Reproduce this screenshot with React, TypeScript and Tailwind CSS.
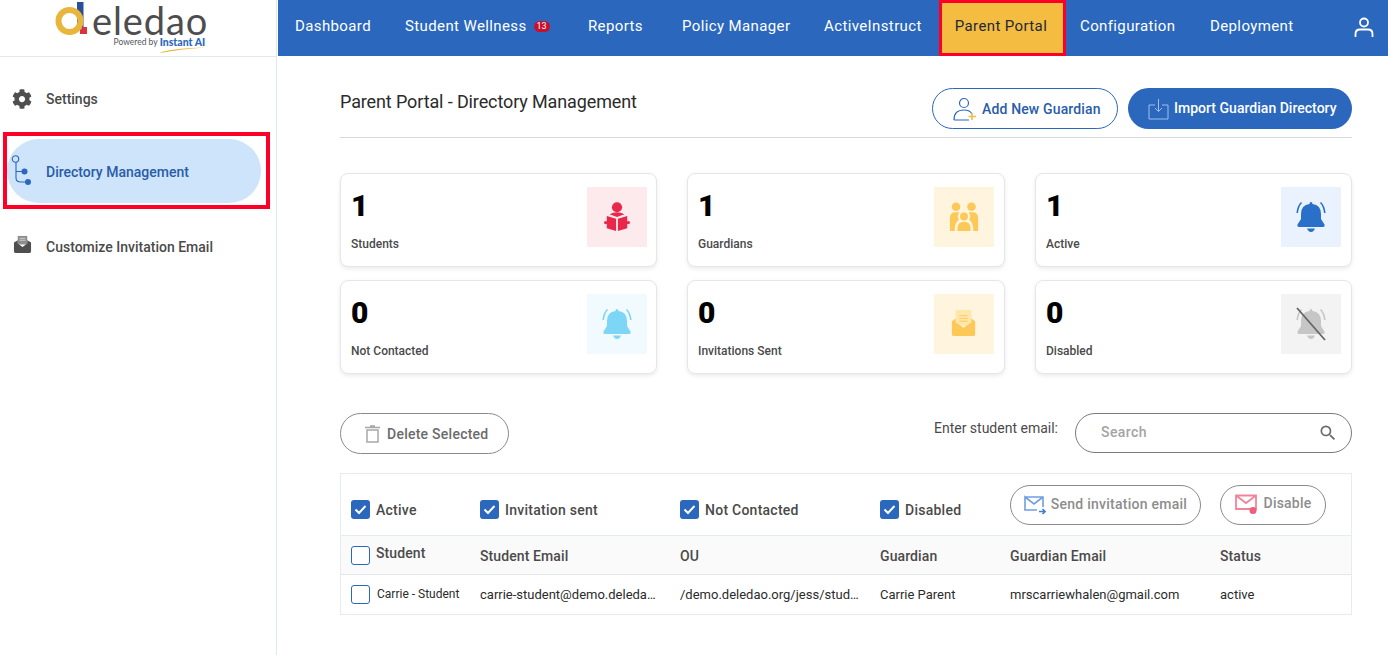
import React from "react";
import { FaCog } from "react-icons/fa";
import { MdSearch } from "react-icons/md";

const NAV = [
  { label: "Dashboard", cls: "ml-[17px] w-[110px]" },
  { label: "Student Wellness", cls: "w-[183px]", badge: true },
  { label: "Reports", cls: "w-[94px]" },
  { label: "Policy Manager", cls: "w-[142px]" },
  { label: "ActiveInstruct", cls: "w-[115px]" },
];

function Logo() {
  return (
    <div className="h-[57px] border-b border-[#e3e8ef] flex items-start pl-[55px] pt-[2px]">
      <svg width="33" height="36" viewBox="0 0 33 36" className="shrink-0">
        <rect x="22" y="0" width="6.5" height="26" fill="#2a4f97" />
        <circle cx="14.5" cy="19" r="11" fill="none" stroke="#e9b63d" strokeWidth="6" />
        <path d="M25 32 L25 28 L28 25 L32 25 L32 32 Z" fill="#d8343f" />
      </svg>
      <div className="flex flex-col items-end ml-[4px]">
        <span className="font-['Lato',sans-serif] text-[38px] leading-[32px] tracking-[0.9px] text-[#4d4d4f] mt-[2px]">eledao</span>
        <div className="flex items-center h-[13px] mr-[3px]">
          <span className="font-['Lato',sans-serif] text-[8.5px] leading-[13px] text-[#55575a]">Powered by</span>
          <span className="relative ml-[2px] font-['Lato',sans-serif] font-black text-[10.5px] leading-[13px] text-[#2a67bd]">
            Instant AI
            <svg width="46" height="6" viewBox="0 0 46 6" className="absolute left-0 top-[11px]">
              <path d="M0 5.5 Q14 1 46 0.5 Q18 2.5 2 5.8 Z" fill="#e9b63d" />
            </svg>
          </span>
        </div>
      </div>
    </div>
  );
}

function Sidebar() {
  return (
    <aside className="w-[277px] shrink-0 border-r border-[#e3e8ef] min-h-[655px]">
      <Logo />
      <div className="pt-[15px]">
        <div className="h-[54px] flex items-center pl-[12px]">
          <FaCog className="text-[#4f4f4f]" size={20} />
          <span className="ml-[14px] text-[14px] font-medium text-[#4a4a4a]">Settings</span>
        </div>
        <div className="mt-[6px] ml-[3px] w-[267px] h-[77px] border-[4px] border-[#fe0027] pt-[3px]">
          <div className="w-[254px] h-[64px] rounded-full bg-[#cde4fb] flex items-center pl-[4px]">
            <svg width="24" height="36" viewBox="0 0 24 36" fill="none" className="shrink-0">
              <circle cx="4.5" cy="6" r="3.2" stroke="#2a67bd" strokeWidth="1.1" />
              <path d="M5 9 V25 Q5 29 10 29 H17 M5 18.5 H13" stroke="#2a67bd" strokeWidth="1.1" />
              <circle cx="13.5" cy="18.5" r="3" fill="#2a67bd" />
              <circle cx="17" cy="29" r="3" fill="#2a67bd" />
            </svg>
            <span className="ml-[11px] pt-[2px] text-[14px] font-medium text-[#2a5ca8]">Directory Management</span>
          </div>
        </div>
        <div className="mt-[10px] h-[56px] flex items-center pl-[13px]">
          <svg width="19" height="19" viewBox="0 0 20 20" className="shrink-0 -mt-[6px]">
            <rect x="5" y="1" width="10" height="9" fill="#8d8d8d" />
            <path d="M7 3.5h6M7 5.5h6" stroke="#e5e5e5" strokeWidth="0.8" />
            <path d="M1 8 L5 5.5 V9 L10 12.5 L15 9 V5.5 L19 8 V17 Q19 19 17 19 H3 Q1 19 1 17 Z" fill="#4f4f4f" />
          </svg>
          <span className="ml-[14px] text-[14px] font-medium text-[#4a4a4a]">Customize Invitation Email</span>
        </div>
      </div>
    </aside>
  );
}

function TopNav() {
  return (
    <nav className="h-[56px] bg-[#2a67bd] flex items-center text-white text-[15px] tracking-[0.38px]">
      {NAV.map((n) => (
        <div key={n.label} className={`${n.cls} flex items-center -mt-[4px]`}>
          <span>{n.label}</span>
          {n.badge && (
            <span className="ml-[7px] w-[16px] h-[11px] rounded-full bg-[#c8102e] text-[9px] leading-[11px] text-center tracking-normal">13</span>
          )}
        </div>
      ))}
      <div className="w-[127px] h-[56px] bg-[#f4bc40] border-[3px] border-[#fe0027] flex items-center justify-center text-[#1f2937] pr-[3px]">
        <span className="-mt-[4px]">Parent Portal</span>
      </div>
      <span className="ml-[14px] w-[130px] -mt-[4px]">Configuration</span>
      <span className="w-[87px] -mt-[4px]">Deployment</span>
      <svg width="22" height="24" viewBox="0 0 22 24" fill="none" className="ml-[56px]" stroke="white" strokeWidth="1.8">
        <circle cx="11" cy="6.5" r="4" />
        <path d="M2.5 21 V18 Q2.5 13.5 7 13.5 H15 Q19.5 13.5 19.5 18 V21" />
      </svg>
    </nav>
  );
}

function BellIcon({ color }: { color: string }) {
  return (
    <svg width="30" height="32" viewBox="0 0 30 32" fill={color}>
      <path d="M15 1 Q16.5 1 16.5 3 Q25 4 25 13 V18 L28.5 23.5 Q29 26 27 26 H3 Q1 26 1.5 23.5 L5 18 V13 Q5 4 13.5 3 Q13.5 1 15 1 Z" />
      <path d="M11 27.5 H19 Q17.5 31 15 31 Q12.5 31 11 27.5 Z" />
      <path d="M5.5 1.5 Q2 5 1.2 12 M24.5 1.5 Q28 5 28.8 12" fill="none" stroke={color} strokeWidth="1.6" />
    </svg>
  );
}
function StudentIcon() {
  return (
    <svg width="26" height="30" viewBox="0 0 28 32" fill="#e8274b">
      <circle cx="14" cy="5.5" r="5.5" />
      <path d="M3 15 L13 18 V31 L3 28 Z M25 15 L15 18 V31 L25 28 Z M6 13 Q14 9 22 13 L14 16 Z" />
      <circle cx="1.8" cy="22" r="1.8" />
      <circle cx="26.2" cy="22" r="1.8" />
    </svg>
  );
}
function FamilyIcon() {
  return (
    <svg width="30" height="30" viewBox="0 0 32 32" fill="#fcc958">
      <circle cx="7.5" cy="5" r="4.6" />
      <circle cx="24" cy="5" r="4.6" />
      <path d="M1 31 V17 Q1 11 7 11 H11 Q8 15 10.5 19 Q6 22 6 31 Z" />
      <path d="M31 31 V17 Q31 11 25 11 H21 Q24 15 21.5 19 Q26 22 26 31 Z" />
      <circle cx="16" cy="15.5" r="4.2" />
      <path d="M9 31 V28 Q9 21 16 21 Q23 21 23 28 V31 Z" />
    </svg>
  );
}
function MailIcon() {
  return (
    <svg width="26" height="28" viewBox="0 0 28 30" fill="none">
      <rect x="5" y="0" width="17" height="17" fill="#ffe7ab" />
      <path d="M9 6h9M9 9h9M9 12h9" stroke="#fcc958" strokeWidth="1" />
      <path d="M1 12 L5 9 V13 L13.5 19 L22 13 V9 L26 12 V26 Q26 28 24 28 H3 Q1 28 1 26 Z" fill="#fcc958" />
    </svg>
  );
}
function DisabledBell() {
  return (
    <div className="relative w-[30px] h-[34px] flex items-center justify-center">
      <BellIcon color="#c6c6c6" />
      <svg width="30" height="34" viewBox="0 0 30 34" className="absolute left-0 top-0">
        <path d="M1 1 L29 33" stroke="#666" strokeWidth="1.8" />
      </svg>
    </div>
  );
}

const CARDS = [
  { n: "1", label: "Students", bg: "bg-[#fdeaed]", pr: "pr-[9px]", icon: <StudentIcon /> },
  { n: "1", label: "Guardians", bg: "bg-[#fff4de]", pr: "pr-[10px]", icon: <FamilyIcon /> },
  { n: "1", label: "Active", bg: "bg-[#eaf3fd]", pr: "pr-[10px]", icon: <BellIcon color="#2a70c8" /> },
  { n: "0", label: "Not Contacted", bg: "bg-[#f1faff]", pr: "pr-[9px]", icon: <BellIcon color="#7dd6f5" /> },
  { n: "0", label: "Invitations Sent", bg: "bg-[#fff4de]", pr: "pr-[10px]", icon: <MailIcon /> },
  { n: "0", label: "Disabled", bg: "bg-[#f3f3f3]", pr: "pr-[10px]", icon: <DisabledBell /> },
];

function Card({ n, label, bg, pr, icon }: { n: string; label: string; bg: string; pr: string; icon: React.ReactNode }) {
  return (
    <div className={`h-[94px] rounded-lg border border-[#e6e6e6] shadow-[0_2px_4px_rgba(0,0,0,0.08)] bg-white flex justify-between pl-[10px] ${pr} pt-[13px]`}>
      <div>
        <div className="text-[30px] leading-[36px] font-black text-black pt-[1px]">{n}</div>
        <div className="mt-[12px] text-[12px] leading-[16px] font-medium text-[#4a4a4a]">{label}</div>
      </div>
      <div className={`w-[60px] h-[60px] ${bg} flex items-center justify-center`}>{icon}</div>
    </div>
  );
}

function Check({ on }: { on?: boolean }) {
  return on ? (
    <span className="w-[19px] h-[19px] shrink-0 rounded-[3px] bg-[#2a67bd] flex items-center justify-center">
      <svg width="13" height="11" viewBox="0 0 13 11" fill="none">
        <path d="M1.5 5.5 L5 9 L11.5 2" stroke="white" strokeWidth="2" />
      </svg>
    </span>
  ) : (
    <span className="w-[19px] h-[19px] shrink-0 rounded-[3px] border border-[#2a67bd] bg-white" />
  );
}

function Filter({ label }: { label: string }) {
  return (
    <div className="flex items-center gap-[6px] pt-[10px]">
      <Check on />
      <span className="pt-[2px] text-[14px] tracking-[0.25px] font-medium text-[#4a4a4a]">{label}</span>
    </div>
  );
}

const GRID = "grid grid-cols-[140px_200px_200px_130px_210px_1fr]";

function Table() {
  return (
    <div className="mt-[19px] border border-[#e6ecf3] text-[#4a4a4a]">
      <div className={`${GRID} h-[62px] items-center border-b border-[#e6ecf3]`}>
        <div className="pl-[10px]"><Filter label="Active" /></div>
        <div className="-ml-[1px]"><Filter label="Invitation sent" /></div>
        <div className="-ml-[1px]"><Filter label="Not Contacted" /></div>
        <div className="-ml-[1px]"><Filter label="Disabled" /></div>
        <div className="-ml-[1px]">
          <button className="w-[191px] h-[40px] rounded-full border border-[#8a8a8a] flex items-center justify-center gap-[5px] text-[14px] tracking-[0.25px] font-medium text-[#8d8d8d]">
            <svg width="22" height="20" viewBox="0 0 22 20" fill="none" stroke="#6f9fdf" strokeWidth="1.6">
              <path d="M1 2 H19 V12 M13 15 H1 V2 L10 9 L19 2" />
              <path d="M15 16.5 H21 M18.5 14 L21 16.5 L18.5 19" stroke="#3f7fd0" />
            </svg>
            Send invitation email
          </button>
        </div>
        <div className="-ml-[1px]">
          <button className="w-[106px] h-[40px] rounded-full border border-[#8a8a8a] flex items-center justify-center gap-[6px] text-[14px] tracking-[0.2px] font-medium text-[#8d8d8d]">
            <svg width="23" height="21" viewBox="0 0 23 21" fill="none" stroke="#f2849a" strokeWidth="1.8">
              <path d="M1 1.5 H21 V15 H1 Z M1 1.5 L11 9 L21 1.5" />
              <circle cx="18" cy="16.5" r="3.5" fill="#ee5f7d" stroke="none" />
            </svg>
            <span className="-mt-[2px]">Disable</span>
          </button>
        </div>
      </div>
      <div className={`${GRID} h-[39px] items-center bg-[#fafafa] border-b border-[#e3e6ea] text-[14px] font-medium tracking-[0.1px]`}>
        <div className="pl-[10px] flex items-center gap-[6px]">
          <Check />
          <span className="-mt-[3px]">Student</span>
        </div>
        <div className="-ml-[1px] pt-[2px]">Student Email</div>
        <div className="-ml-[1px] pt-[2px]">OU</div>
        <div className="-ml-[1px] pt-[2px]">Guardian</div>
        <div className="-ml-[1px] pt-[2px]">Guardian Email</div>
        <div className="-ml-[1px] pt-[2px]">Status</div>
      </div>
      <div className={`${GRID} h-[39px] items-center text-[13px] text-[#2b2b2b]`}>
        <div className="pl-[10px] flex items-center gap-[7px]">
          <Check />
          <span className="text-[12px] -mt-[1px]">Carrie - Student</span>
        </div>
        <div className="-ml-[1px] w-[178px] truncate">carrie-student@demo.deledao.org</div>
        <div className="-ml-[1px] w-[180px] truncate">/demo.deledao.org/jess/students</div>
        <div className="-ml-[1px]">Carrie Parent</div>
        <div className="-ml-[1px]">mrscarriewhalen@gmail.com</div>
        <div className="-ml-[1px]">active</div>
      </div>
    </div>
  );
}

function Main() {
  return (
    <main className="pl-[62px] pr-[36px]">
      <div className="pt-[32px] pb-[8px] border-b border-[#d9d9d9] flex items-start justify-between">
        <h1 className="text-[18px] leading-[28px] text-[#2b2b2b] tracking-[-0.12px]">Parent Portal - Directory Management</h1>
        <div className="flex gap-[10px]">
          <button className="w-[186px] h-[41px] rounded-full border border-[#2a67bd] flex items-center pl-[19px] gap-[4px] text-[14px] font-medium tracking-[0.15px] text-[#2a5ca8]">
            <svg width="26" height="24" viewBox="0 0 26 24" fill="none" stroke="#2a67bd" strokeWidth="1.2">
              <circle cx="12" cy="6" r="4.5" />
              <path d="M2 23 Q2 13 12 13 Q18 13 20 17 M2 23 H17" />
              <path d="M20 16 V23 M16.5 19.5 H24" stroke="#f4bc40" strokeWidth="1.6" />
            </svg>
            <span className="pt-[2px]">Add New Guardian</span>
          </button>
          <button className="w-[224px] h-[41px] rounded-full bg-[#2a67bd] flex items-center pl-[20px] gap-[5px] text-[14px] font-medium tracking-[0.02px] text-white">
            <svg width="21" height="22" viewBox="0 0 21 22" fill="none" stroke="#9fc0ec" strokeWidth="1">
              <path d="M7 7 H1 V21 H20 V7 H14" />
              <path d="M10.5 1 V13 M7 10 L10.5 13.5 L14 10" />
            </svg>
            Import Guardian Directory
          </button>
        </div>
      </div>
      <div className="mt-[35px] grid grid-cols-[317px_318px_317px] gap-x-[30px] gap-y-[13px]">
        {CARDS.map((c) => (
          <Card key={c.label} {...c} />
        ))}
      </div>
      <div className="mt-[39px] flex items-start justify-between">
        <button className="w-[169px] h-[41px] rounded-full border border-[#8a8a8a] flex items-center pl-[24px] gap-[7px] text-[14px] font-medium tracking-[0.25px] text-[#6b6b6b]">
          <svg width="15" height="18" viewBox="0 0 15 18" fill="none" stroke="#a8a8a8" strokeWidth="1.5">
            <path d="M0 2.5 H15 M5 1 H10 M2 5 H13 V17 H2 Z" />
          </svg>
          <span className="pt-[2px]">Delete Selected</span>
        </button>
        <div className="flex items-start">
          <span className="mt-[5px] mr-[17px] text-[14px] text-[#4a4a4a]">Enter student email:</span>
          <div className="w-[277px] h-[40px] rounded-full border border-[#7a7a7a] flex items-center justify-between pl-[25px] pr-[13px]">
            <span className="-mt-[2px] text-[14px] font-medium tracking-[0.4px] text-[#a3a3a3]">Search</span>
            <MdSearch size={20} color="#6b6b6b" />
          </div>
        </div>
      </div>
      <Table />
    </main>
  );
}

export default function App() {
  return (
    <div className="flex w-[1388px] h-[655px] overflow-hidden bg-white font-['Roboto',sans-serif]">
      <Sidebar />
      <div className="flex-1 min-w-0">
        <div className="ml-[1px]"><TopNav /></div>
        <div className="pl-[1px]"><Main /></div>
      </div>
    </div>
  );
}
